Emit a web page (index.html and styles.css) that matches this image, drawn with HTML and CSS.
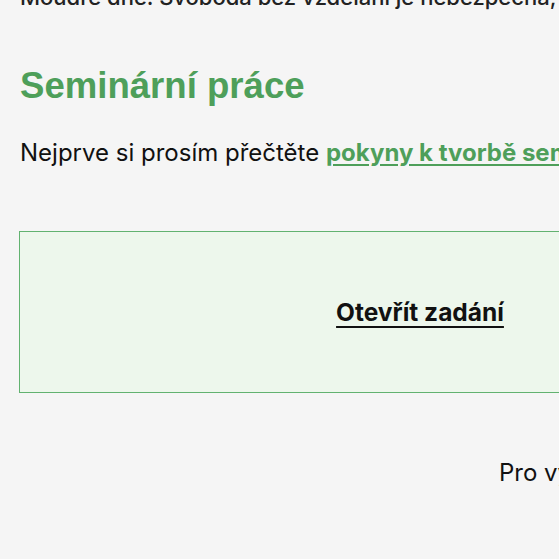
FILE: index.html
```html
<!DOCTYPE html>
<html lang="cs">
<head>
<meta charset="utf-8">
<title>Seminární práce</title>
<link rel="stylesheet" href="styles.css">
</head>
<body>
<main class="page">
  <p class="quote">Moudré dne. Svoboda bez vzdělání je nebezpečná, vzdělání bez svobody je marné.</p>
  <h2 class="title">Seminární práce</h2>
  <p class="intro">Nejprve si prosím přečtěte <a class="green-link" href="#">pokyny k tvorbě seminární práce</a>.</p>
  <div class="task-box">
    <a class="task-link" href="#">Otevřít zadání</a>
  </div>
  <p class="note">Pro vypracování máte čas do konce pololetí.</p>
</main>
</body>
</html>
```
FILE: styles.css
```css
html, body {
  margin: 0;
  padding: 0;
  background: #f5f5f5;
}
body {
  font-family: Inter, "Noto Sans", sans-serif;
  color: #111;
}
.page {
  width: 802px;
  padding: 0 20px 0 19px;
  margin-top: -21px;
}
.quote {
  margin: 0 0 0 1px;
  font-size: 22px;
  line-height: 36px;
  font-weight: 500;
  color: #222;
  white-space: nowrap;
}
.title {
  margin: 49px 0 0 1px;
  font-family: "Liberation Sans", Arial, sans-serif;
  font-size: 36.6px;
  line-height: 44px;
  font-weight: 700;
  color: #4e9f5a;
}
.intro {
  margin: 27px 0 0 1px;
  font-size: 24px;
  line-height: 36px;
  white-space: nowrap;
}
.green-link {
  color: #4e9f5a;
  font-weight: 700;
  text-decoration: underline;
  text-underline-offset: 3px;
}
.task-box {
  margin-top: 60px;
  height: 160px;
  border: 1.5px solid #62b270;
  background: #edf7ec;
  display: flex;
  align-items: center;
  justify-content: center;
}
.task-link {
  font-size: 24.5px;
  font-weight: 700;
  color: #111;
  text-decoration: underline;
  text-underline-offset: 5px;
}
.note {
  margin: 62px 0 0 480px;
  font-size: 24px;
  line-height: 36px;
  white-space: nowrap;
}
```
